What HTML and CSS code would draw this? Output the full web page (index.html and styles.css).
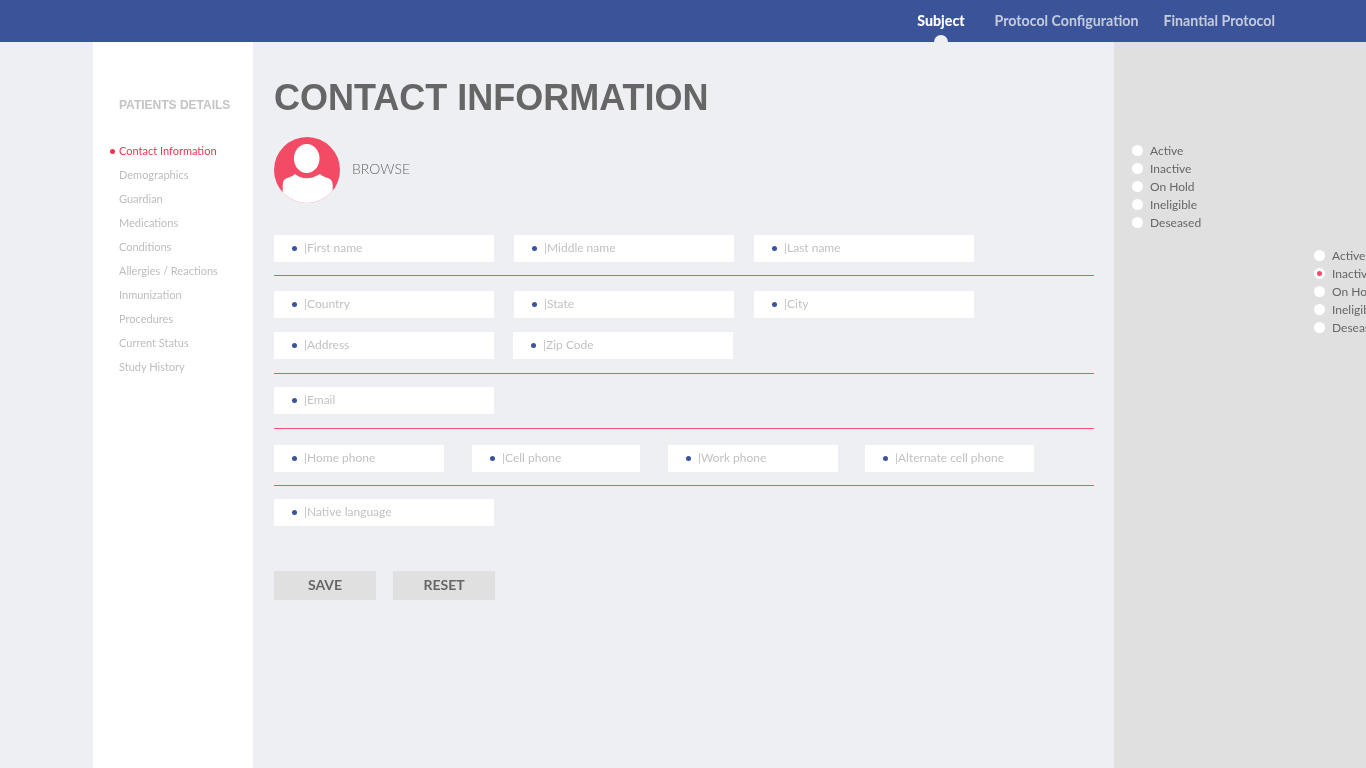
FILE: index.html
```html
<!DOCTYPE html>
<html lang="en">
<head>
    <meta charset="UTF-8">
    <meta name="viewport" content="width=device-width, initial-scale=1.0">
    <title>Contact Information</title>
    <link rel="stylesheet" href="styles.css">
</head>
<body>
    <header class="topbar">
        <nav class="topnav">
            <a class="topnav-link active" href="#">Subject</a>
            <a class="topnav-link" href="#">Protocol Configuration</a>
            <a class="topnav-link" href="#">Finantial Protocol</a>
        </nav>
    </header>
    <div class="page">
        <aside class="sidebar">
            <h3 class="sidebar-title">PATIENTS DETAILS</h3>
            <ul class="side-menu">
                <li class="active">Contact Information</li>
                <li>Demographics</li>
                <li>Guardian</li>
                <li>Medications</li>
                <li>Conditions</li>
                <li>Allergies / Reactions</li>
                <li>Inmunization</li>
                <li>Procedures</li>
                <li>Current Status</li>
                <li>Study History</li>
            </ul>
        </aside>
        <main class="content">
            <h1 class="title">CONTACT INFORMATION</h1>
            <div class="avatar-row">
                <svg class="avatar" width="66" height="66" viewBox="0 0 66 66">
                    <defs><clipPath id="avatarClip"><circle cx="33" cy="33" r="33"/></clipPath></defs>
                    <circle cx="33" cy="33" r="33" fill="#f34b66"/>
                    <g clip-path="url(#avatarClip)" fill="#fff">
                        <ellipse cx="32.7" cy="21.5" rx="12.8" ry="14.5"/>
                        <path d="M8.7 66V48c0-3.5 1.5-6 4-6.7 3-.9 6-2.3 8.3-4.3 3 2.7 7.5 4.3 11.7 4.3s8.7-1.6 13.3-4.3c2.3 2 5.3 3.4 8.3 4.3 2.5.7 4.4 3.2 4.4 6.7v18z"/>
                    </g>
                </svg>
                <span class="browse">BROWSE</span>
            </div>
            <form class="contact-form">
                <div class="row">
                    <div class="field">|First name</div>
                    <div class="field">|Middle name</div>
                    <div class="field">|Last name</div>
                </div>
                <hr class="divider">
                <div class="row">
                    <div class="field">|Country</div>
                    <div class="field">|State</div>
                    <div class="field">|City</div>
                </div>
                <div class="row row-address">
                    <div class="field">|Address</div>
                    <div class="field">|Zip Code</div>
                </div>
                <hr class="divider divider-address">
                <div class="row">
                    <div class="field">|Email</div>
                </div>
                <hr class="divider divider-email">
                <div class="row row-phones">
                    <div class="field w170">|Home phone</div>
                    <div class="field w168">|Cell phone</div>
                    <div class="field w170">|Work phone</div>
                    <div class="field w169">|Alternate cell phone</div>
                </div>
                <hr class="divider divider-phones">
                <div class="row">
                    <div class="field">|Native language</div>
                </div>
                <div class="buttons">
                    <button type="button" class="btn">SAVE</button>
                    <button type="button" class="btn">RESET</button>
                </div>
            </form>
        </main>
        <aside class="panel">
            <ul class="status-list">
                <li>Active</li>
                <li>Inactive</li>
                <li>On Hold</li>
                <li>Ineligible</li>
                <li>Deseased</li>
            </ul>
            <ul class="status-list second">
                <li>Active</li>
                <li class="checked">Inactive</li>
                <li>On Hold</li>
                <li>Ineligible</li>
                <li>Deseased</li>
            </ul>
        </aside>
    </div>
</body>
</html>
```

FILE: styles.css
```css
* {
    box-sizing: border-box;
}

html, body {
    height: 100%;
}

body {
    margin: 0;
    font-family: Lato, Arial, sans-serif;
    background-color: #eeeff3;
    overflow: hidden;
}

.topbar {
    height: 42px;
    background-color: #3b5499;
    overflow: hidden;
    display: flex;
    justify-content: flex-end;
    padding-right: 91px;
    will-change: transform;
}

.topnav {
    display: flex;
    gap: 25px;
    padding-top: 12px;
}

.topnav-link {
    position: relative;
    color: #c5cbdf;
    font-size: 14.2px;
    font-weight: 700;
    line-height: 18px;
    text-decoration: none;
}

.topnav-link.active {
    color: #fff;
    font-weight: 900;
    margin-right: 5px;
}

.topnav-link.active::after {
    content: "";
    position: absolute;
    left: 17px;
    top: 23px;
    width: 14px;
    height: 14px;
    border-radius: 50%;
    background-color: #eeeff3;
}

.page {
    display: flex;
    height: calc(100vh - 42px);
    padding-left: 93px;
    will-change: transform;
}

.sidebar {
    width: 160px;
    background-color: #fff;
    padding: 56px 0 0 26px;
}

.sidebar-title {
    margin: 0;
    font-family: "Liberation Sans", Arial, sans-serif;
    font-size: 12px;
    font-weight: 700;
    line-height: 15px;
    color: #c4c4c4;
}

.side-menu {
    list-style: none;
    margin: 26px 0 0;
    padding: 0;
}

.side-menu li {
    position: relative;
    height: 24px;
    font-size: 11px;
    line-height: 24px;
    color: #bdbdbd;
}

.side-menu li.active {
    color: #f0354f;
}

.side-menu li.active::before {
    content: "";
    position: absolute;
    left: -9px;
    top: 10px;
    width: 5px;
    height: 5px;
    border-radius: 50%;
    background-color: #f0354f;
}

.content {
    width: 861px;
    padding: 0 20px 0 21px;
}

.title {
    margin: 0;
    padding-top: 35px;
    font-family: "Liberation Sans", Arial, sans-serif;
    font-size: 36px;
    font-weight: 700;
    line-height: 42px;
    color: #666;
}

.avatar-row {
    display: flex;
    align-items: center;
    gap: 12px;
    margin-top: 18px;
}

.avatar {
    display: block;
}

.browse {
    padding-bottom: 4px;
    font-size: 14px;
    font-weight: 300;
    color: #666;
}

.contact-form {
    margin-top: 32px;
}

.row {
    display: flex;
    gap: 20px;
}

.row-address {
    gap: 19px;
    margin-top: 14px;
}

.row-phones {
    gap: 28px;
}

.row-phones .w169 {
    margin-left: -1px;
}

.field {
    position: relative;
    width: 220px;
    height: 27px;
    padding-left: 30px;
    background-color: #fff;
    font-size: 12px;
    line-height: 26px;
    color: #c2c2c2;
}

.field::before {
    content: "";
    position: absolute;
    left: 18px;
    top: 11px;
    width: 5px;
    height: 5px;
    border-radius: 50%;
    background-color: #3b5499;
}

.w170 {
    width: 170px;
}

.w168 {
    width: 168px;
}

.w169 {
    width: 169px;
}

.divider {
    height: 1px;
    margin: 13px 0 15px;
    border: 0;
    background-color: #f0556d;
}

.divider-address {
    margin: 14px 0 13px;
}

.divider-email {
    margin: 14px 0 16px;
}

.divider-phones {
    margin: 13px 0 13px;
}

.buttons {
    display: flex;
    gap: 17px;
    margin-top: 45px;
}

.btn {
    width: 102px;
    height: 29px;
    padding: 0 0 2px;
    border: 0;
    background-color: #e0e0e0;
    font-family: Lato, Arial, sans-serif;
    font-size: 14px;
    font-weight: 700;
    color: #666;
    cursor: pointer;
}

.panel {
    flex: 1;
    background-color: #e0e0e0;
    padding: 100px 0 0 17px;
    overflow: hidden;
}

.status-list {
    list-style: none;
    margin: 0;
    padding: 0;
}

.status-list.second {
    margin: 15px 0 0 182px;
    white-space: nowrap;
}

.status-list li {
    position: relative;
    height: 18px;
    padding-left: 19px;
    font-size: 12px;
    line-height: 18px;
    color: #666;
}

.status-list li::before {
    content: "";
    position: absolute;
    left: 1px;
    top: 3px;
    width: 11px;
    height: 11px;
    border-radius: 50%;
    background-color: #fff;
}

.status-list li.checked::after {
    content: "";
    position: absolute;
    left: 4px;
    top: 6px;
    width: 5px;
    height: 5px;
    border-radius: 50%;
    background-color: #f34b66;
}
```
